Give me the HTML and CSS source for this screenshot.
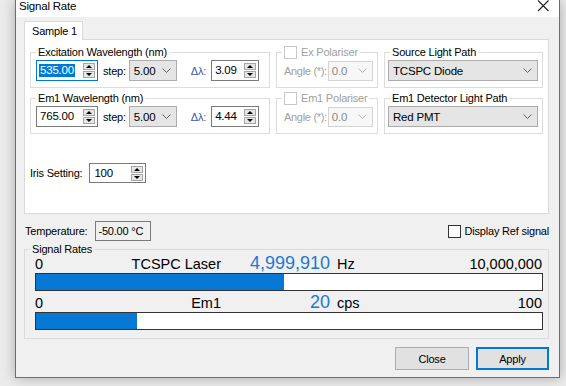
FILE: index.html
```html
<!DOCTYPE html>
<html lang="en">
<head>
  <meta charset="UTF-8" />
  <meta name="viewport" content="width=device-width, initial-scale=1.0"/>
  <title>Signal Rate</title>
  <link rel="stylesheet" href="styles.css">
</head>
<body>

<div class="window">
  <div class="titlebar">
    <span class="title">Signal Rate</span>
    <svg class="close" width="12" height="12" viewBox="0 0 12 12"><path d="M1 0.5L11.5 11M11.5 0.5L1 11" stroke="#222" stroke-width="1.1" fill="none"/></svg>
  </div>

  <div class="content">
    <div class="tabs"><div class="tab">Sample 1</div></div>
    <div class="panel">
      <div class="groups">
        <fieldset class="group">
          <legend>Excitation Wavelength (nm)</legend>
          <div class="line">
            <div class="spin focus wide"><span class="val sel">535.00</span><span class="arrows"><i class="up"></i><i class="down"></i></span></div>
            <span class="step">step:</span>
            <div class="combo small"><span>5.00</span><svg width="9" height="5" viewBox="0 0 9 5"><path d="M0.5 0.5L4.5 4.5L8.5 0.5" stroke="#606060" fill="none"/></svg></div>
            <span class="delta">&Delta;&lambda;:</span>
            <div class="spin narrow"><span class="val">3.09</span><span class="arrows"><i class="up"></i><i class="down"></i></span></div>
          </div>
        </fieldset>

        <fieldset class="group">
          <legend class="check-legend"><span class="box disabled"></span><span class="dim">Ex Polariser</span></legend>
          <div class="line">
            <span class="dim angle">Angle (*):</span>
            <div class="combo off"><span>0.0</span><svg width="9" height="5" viewBox="0 0 9 5"><path d="M0.5 0.5L4.5 4.5L8.5 0.5" stroke="#b8b8b8" fill="none"/></svg></div>
          </div>
        </fieldset>

        <fieldset class="group path">
          <legend>Source Light Path</legend>
          <div class="line">
            <div class="combo long"><span>TCSPC Diode</span><svg width="9" height="5" viewBox="0 0 9 5"><path d="M0.5 0.5L4.5 4.5L8.5 0.5" stroke="#606060" fill="none"/></svg></div>
          </div>
        </fieldset>

        <fieldset class="group">
          <legend>Em1 Wavelength (nm)</legend>
          <div class="line">
            <div class="spin wide"><span class="val">765.00</span><span class="arrows"><i class="up"></i><i class="down"></i></span></div>
            <span class="step">step:</span>
            <div class="combo small"><span>5.00</span><svg width="9" height="5" viewBox="0 0 9 5"><path d="M0.5 0.5L4.5 4.5L8.5 0.5" stroke="#606060" fill="none"/></svg></div>
            <span class="delta">&Delta;&lambda;:</span>
            <div class="spin narrow"><span class="val">4.44</span><span class="arrows"><i class="up"></i><i class="down"></i></span></div>
          </div>
        </fieldset>

        <fieldset class="group">
          <legend class="check-legend"><span class="box disabled"></span><span class="dim">Em1 Polariser</span></legend>
          <div class="line">
            <span class="dim angle">Angle (*):</span>
            <div class="combo off"><span>0.0</span><svg width="9" height="5" viewBox="0 0 9 5"><path d="M0.5 0.5L4.5 4.5L8.5 0.5" stroke="#b8b8b8" fill="none"/></svg></div>
          </div>
        </fieldset>

        <fieldset class="group path">
          <legend>Em1 Detector Light Path</legend>
          <div class="line">
            <div class="combo long"><span>Red PMT</span><svg width="9" height="5" viewBox="0 0 9 5"><path d="M0.5 0.5L4.5 4.5L8.5 0.5" stroke="#606060" fill="none"/></svg></div>
          </div>
        </fieldset>
      </div>

      <div class="iris">
        <span>Iris Setting:</span>
        <div class="spin iris-spin"><span class="val">100</span><span class="arrows"><i class="up"></i><i class="down"></i></span></div>
      </div>
    </div>

    <div class="temp-row">
      <div class="temp">
        <span>Temperature:</span>
        <div class="readout">-50.00 °C</div>
      </div>
      <label class="ref"><span class="box"></span>Display Ref signal</label>
    </div>

    <fieldset class="rates">
      <legend>Signal Rates</legend>
      <div class="rate">
        <span class="min">0</span>
        <span class="name">TCSPC Laser</span>
        <span class="value">4,999,910</span>
        <span class="unit">Hz</span>
        <span class="max">10,000,000</span>
      </div>
      <div class="bar"><div class="fill" style="width:49%"></div></div>
      <div class="rate second">
        <span class="min">0</span>
        <span class="name">Em1</span>
        <span class="value">20</span>
        <span class="unit">cps</span>
        <span class="max">100</span>
      </div>
      <div class="bar"><div class="fill" style="width:20%"></div></div>
    </fieldset>

    <div class="buttons">
      <button class="btn">Close</button>
      <button class="btn default">Apply</button>
    </div>
  </div>
</div>

</body>
</html>
```

FILE: styles.css
```css
body {
  margin: 0;
  width: 566px;
  height: 386px;
  overflow: hidden;
  background: #ebebeb;
  font-family: 'Liberation Sans', Arial, sans-serif;
  font-size: 11px;
  letter-spacing: -0.2px;
  color: #000;
}
.window {
  margin-left: 15px;
  width: 545px;
  height: 378px;
  box-sizing: border-box;
  border: 1px solid #1883d7;
  border-top: none;
  background: #f0f0f0;
  box-shadow: 0 0 12px rgba(0,0,0,0.28);
}
.titlebar {
  height: 17px;
  background: #fff;
  display: flex;
  justify-content: space-between;
  align-items: flex-start;
  padding: 0 10px 0 3px;
}
.title {
  font-size: 11.5px;
  line-height: 12px;
}
.close {
  display: block;
}
.content {
  padding: 4px 10px 0 8px;
}
.tabs {
  display: flex;
  height: 18px;
}
.tab {
  position: relative;
  z-index: 1;
  width: 59px;
  height: 19px;
  box-sizing: border-box;
  border: 1px solid #d9d9d9;
  border-bottom: none;
  background: #fff;
  padding-left: 7px;
  display: flex;
  align-items: center;
}
.panel {
  height: 175px;
  box-sizing: border-box;
  background: #fff;
  border: 1px solid #d9d9d9;
  padding: 6px 5px 0 5px;
}
.groups {
  display: grid;
  grid-template-columns: 240px 102px 159px;
  column-gap: 6px;
  row-gap: 4px;
}
.group {
  margin: 0;
  min-width: 0;
  border: 1px solid #dcdcdc;
  padding: 1px 5px 6px;
}
.group legend {
  padding: 0 2px;
  line-height: 13px;
  white-space: nowrap;
}
.group.path {
  padding-left: 3px;
}
.group.path legend {
  margin-left: 2px;
}
.check-legend {
  display: flex;
  align-items: center;
}
.line {
  display: flex;
  align-items: center;
  height: 21px;
  white-space: nowrap;
}
.line > * {
  flex-shrink: 0;
}
.dim {
  color: #a0a0a0;
}
.box {
  display: inline-block;
  width: 13px;
  height: 13px;
  box-sizing: border-box;
  border: 1px solid #333;
  background: #fff;
  margin-right: 4px;
}
.box.disabled {
  border-color: #c8c8c8;
}
.spin {
  height: 21px;
  box-sizing: border-box;
  border: 1px solid #7a7a7a;
  background: #fff;
  display: flex;
  align-items: center;
  justify-content: space-between;
  padding: 0 2px 0 2px;
}
.spin.focus {
  border-color: #0078d7;
}
.spin.wide {
  width: 62px;
}
.spin.narrow {
  width: 48px;
}
.val {
  font-size: 11.5px;
  line-height: 13px;
  padding: 0 1px;
}
.val.sel {
  background: #0078d7;
  color: #fff;
}
.arrows {
  display: flex;
  flex-direction: column;
  gap: 1px;
}
.arrows i {
  width: 12px;
  height: 7px;
  box-sizing: border-box;
  border: 1px solid #a6a6a6;
  background: #e6e6e6;
  display: flex;
  align-items: center;
  justify-content: center;
}
.arrows i::after {
  content: "";
  border-left: 3px solid transparent;
  border-right: 3px solid transparent;
}
.arrows .up::after {
  border-bottom: 3px solid #000;
}
.arrows .down::after {
  border-top: 3px solid #000;
}
.step {
  margin: 0 3px 0 5px;
}
.combo {
  height: 21px;
  box-sizing: border-box;
  background: #e5e5e5;
  border: 1px solid #acacac;
  display: flex;
  align-items: center;
  justify-content: space-between;
  padding: 0 5px 0 4px;
  font-size: 11.5px;
}
.combo.small {
  width: 48px;
}
.combo.long {
  width: 150px;
}
.combo.off {
  width: 45px;
  height: 20px;
  background: #f7f7f7;
  border-color: #d4d4d4;
  color: #8a8a8a;
  padding-left: 3px;
}
.angle {
  margin: 0 1px 0 2px;
  letter-spacing: -0.3px;
}
.delta {
  color: #3b5ba5;
  margin: 0 5px 0 14px;
}
.iris {
  display: flex;
  align-items: center;
  margin-top: 29px;
}
.iris-spin {
  width: 57px;
  height: 20px;
  margin-left: 7px;
  padding-left: 3px;
}
.temp-row {
  display: flex;
  justify-content: space-between;
  align-items: center;
  height: 20px;
  margin-top: 7px;
  padding-left: 1px;
}
.temp {
  display: flex;
  align-items: center;
}
.readout {
  width: 56px;
  height: 20px;
  box-sizing: border-box;
  border: 1px solid #7a7a7a;
  background: #f0f0f0;
  margin-left: 8px;
  padding-left: 2px;
  display: flex;
  align-items: center;
}
.ref {
  display: flex;
  align-items: center;
}
.rates {
  margin: 2px 0 0;
  min-width: 0;
  border: 1px solid #dcdcdc;
  padding: 0 5px 8px 10px;
}
.rates legend {
  padding: 0 2px;
  margin-left: -5px;
  line-height: 13px;
}
.rate {
  display: flex;
  align-items: baseline;
  height: 17px;
  font-size: 14.5px;
  line-height: 17px;
  letter-spacing: 0;
}
.rate.second {
  margin-top: 4px;
}
.min {
  width: 40px;
}
.name {
  width: 146px;
  text-align: right;
}
.value {
  width: 109px;
  text-align: right;
  font-size: 18px;
  line-height: 14px;
  color: #1979d3;
}
.unit {
  margin-left: 7px;
}
.max {
  flex: 1;
  text-align: right;
  padding-right: 1px;
}
.bar {
  height: 18px;
  box-sizing: border-box;
  border: 1px solid #333;
  background: #fff;
}
.fill {
  height: 100%;
  background: #0678d4;
}
.buttons {
  display: flex;
  justify-content: flex-end;
  gap: 7px;
  margin-top: 8px;
}
.btn {
  width: 74px;
  height: 23px;
  box-sizing: border-box;
  background: #e1e1e1;
  border: 1px solid #adadad;
  font-family: inherit;
  font-size: 11px;
  letter-spacing: -0.2px;
  color: #000;
  padding: 0;
}
.btn.default {
  width: 73px;
  border: 2px solid #0078d7;
}
```
